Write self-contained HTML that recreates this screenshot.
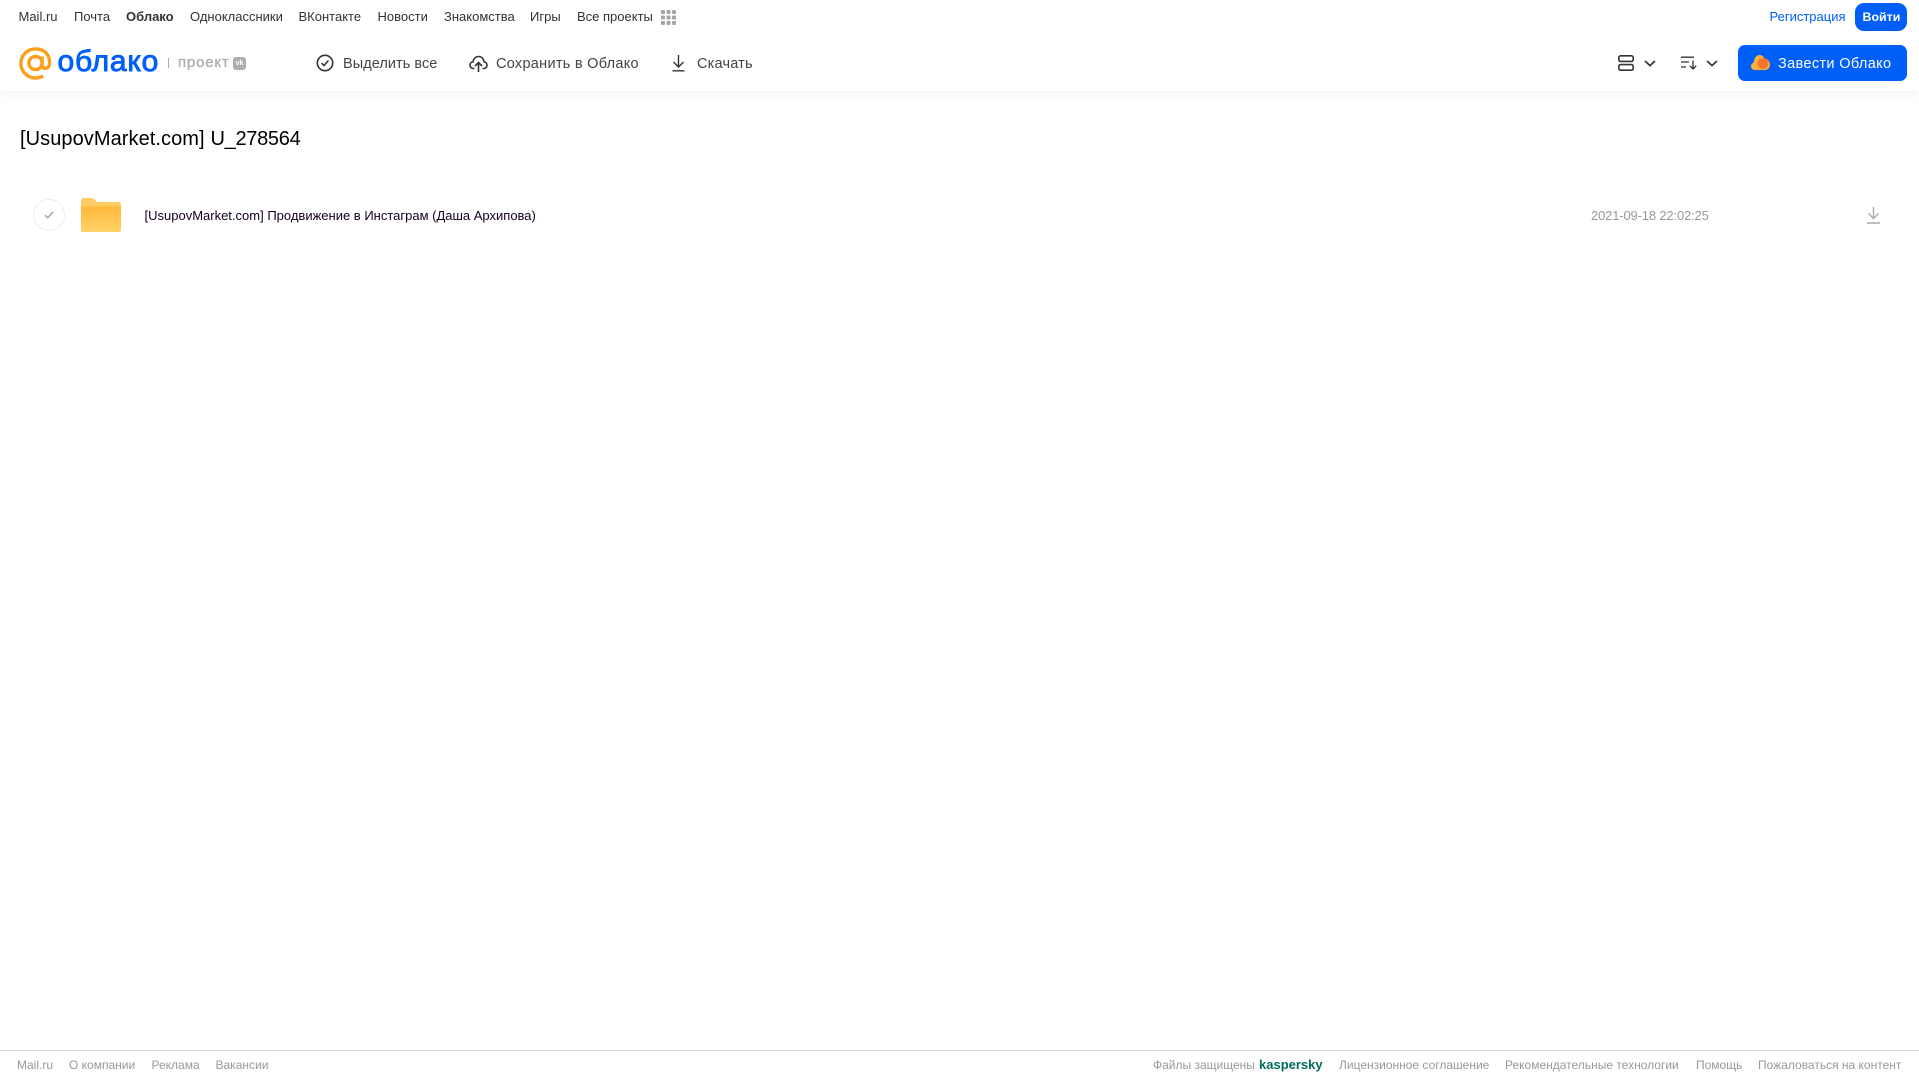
<!DOCTYPE html>
<html lang="ru">
<head>
<meta charset="utf-8">
<title>Облако</title>
<style>
html,body{margin:0;padding:0;background:#fff;}
body{position:relative;width:1919px;height:1079px;overflow:hidden;font-family:"Liberation Sans",sans-serif;color:#2c2d2e;}
.t{position:absolute;white-space:nowrap;line-height:20px;height:20px;}
.n{top:7px;font-size:13px;color:#333;}
.b{top:53.5px;font-size:14.5px;color:#444;}
.f{top:1055px;font-size:12px;color:#999;}
svg{position:absolute;overflow:visible;}
#hdr{position:absolute;left:0;top:0;width:1919px;height:91px;background:#fff;box-shadow:0 2px 8px rgba(0,0,0,.07);}
#btn1{position:absolute;left:1855px;top:3px;width:52px;height:28px;background:#005ff9;border-radius:9px;}
#btn2{position:absolute;left:1738px;top:45px;width:169px;height:36px;background:#005ff9;border-radius:7px;}
#fl{position:absolute;left:0;top:1050px;width:1919px;height:1px;background:#d9d9d9;}
</style>
</head>
<body>
<div id="hdr"></div>

<span class="t n" style="left:18.5px">Mail.ru</span>
<span class="t n" style="left:74px">Почта</span>
<span class="t n" style="left:126px;font-weight:bold">Облако</span>
<span class="t n" style="left:190px">Одноклассники</span>
<span class="t n" style="left:298.5px">ВКонтакте</span>
<span class="t n" style="left:377.5px">Новости</span>
<span class="t n" style="left:444px">Знакомства</span>
<span class="t n" style="left:530px">Игры</span>
<span class="t n" style="left:577px">Все проекты</span>
<svg style="left:661px;top:10px" width="15" height="15" viewBox="0 0 15 15" fill="#a5a5a5">
<rect x="0" y="0" width="4" height="4" rx="1"/><rect x="5.5" y="0" width="4" height="4" rx="1"/><rect x="11" y="0" width="4" height="4" rx="1"/>
<rect x="0" y="5.5" width="4" height="4" rx="1"/><rect x="5.5" y="5.5" width="4" height="4" rx="1"/><rect x="11" y="5.5" width="4" height="4" rx="1"/>
<rect x="0" y="11" width="4" height="4" rx="1"/><rect x="5.5" y="11" width="4" height="4" rx="1"/><rect x="11" y="11" width="4" height="4" rx="1"/>
</svg>

<span class="t n" style="left:1769.5px;color:#005ff9">Регистрация</span>
<div id="btn1"></div>
<span class="t n" style="left:1862.5px;color:#fff;font-weight:bold;font-size:12.4px">Войти</span>

<!-- logo -->
<svg style="left:19px;top:47px" width="33" height="33" viewBox="0 0 33 33" fill="none" stroke="#f9a11b" stroke-width="3.4">
<circle cx="16.5" cy="16" r="6.6"/>
<path d="M23.1 9.5V18.5C23.1 22.5 29.8 22.5 30.4 17.5C31.6 7.5 25 1.9 16.5 1.9C8.4 1.9 1.9 8.2 1.9 16.3C1.9 24.6 8.4 31 16.5 31C19.5 31 22 30.3 24.2 28.9"/>
</svg>
<span class="t" style="left:57.5px;top:46px;height:32px;line-height:32px;font-size:30px;color:#005ff9;letter-spacing:.8px;-webkit-text-stroke:.9px #005ff9">облако</span>
<div style="position:absolute;left:168px;top:58px;width:1px;height:10px;background:#aaa"></div>
<span class="t" style="left:178px;top:53px;font-size:15px;color:#aeaeae;letter-spacing:.8px;-webkit-text-stroke:.35px #aeaeae">проект</span>
<div style="position:absolute;left:233px;top:57px;width:13px;height:13px;background:#aeaeae;border-radius:3px"></div>
<span class="t" style="left:233px;top:57px;width:13px;height:13px;line-height:13px;font-size:7px;font-weight:bold;color:#fff;text-align:center">vk</span>

<!-- toolbar -->
<svg style="left:316px;top:54px" width="18" height="18" viewBox="0 0 18 18" fill="none" stroke="#333" stroke-width="1.6">
<circle cx="9" cy="9" r="7.7"/><path d="M5.6 9.2L8 11.5L12.4 6.6"/>
</svg>
<span class="t b" style="left:343px;letter-spacing:.05px">Выделить все</span>
<svg style="left:469px;top:54px" width="19" height="19" viewBox="0 0 19 19" fill="none" stroke="#333" stroke-width="1.6">
<path d="M5.5 14.5H4.5C2.5 14.5 1 13 1 11.2C1 9.4 2.3 8 4 7.8C4.5 4.6 6.8 2.5 9.6 2.5C12.4 2.5 14.6 4.6 15 7.8C16.7 8 18 9.4 18 11.2C18 13 16.5 14.5 14.5 14.5H13.5"/>
<path d="M9.5 18V9M6 12L9.5 8.5L13 12"/>
</svg>
<span class="t b" style="left:496px;letter-spacing:.28px">Сохранить в Облако</span>
<svg style="left:671px;top:54px" width="15" height="18" viewBox="0 0 15 18" fill="none" stroke="#333" stroke-width="1.4">
<path d="M7.5 1V12.5M2.5 8L7.5 13L12.5 8M1.5 16.8H13.5"/>
</svg>
<span class="t b" style="left:697px;letter-spacing:.2px">Скачать</span>

<svg style="left:1618px;top:55px" width="16" height="16" viewBox="0 0 16 16" fill="none" stroke="#333" stroke-width="1.6">
<rect x=".8" y=".8" width="14.4" height="5.6" rx="1.8"/><rect x=".8" y="9.6" width="14.4" height="5.6" rx="1.8"/>
</svg>
<svg style="left:1644px;top:60px" width="12" height="7" viewBox="0 0 12 7" fill="none" stroke="#333" stroke-width="1.7">
<path d="M1 1L6 5.6L11 1"/>
</svg>
<svg style="left:1681px;top:56px" width="17" height="14" viewBox="0 0 17 14" fill="none" stroke="#333" stroke-width="1.3">
<path d="M0 1.2H13M0 6H8M0 11H5M12 4.5V13M8.8 9.8L12 13L15.2 9.8"/>
</svg>
<svg style="left:1706px;top:60px" width="12" height="7" viewBox="0 0 12 7" fill="none" stroke="#333" stroke-width="1.7">
<path d="M1 1L6 5.6L11 1"/>
</svg>

<div id="btn2"></div>
<svg style="left:1751px;top:54px" width="19" height="17" viewBox="0 0 19 17">
<path d="M4 16C1.8 16 0 14.4 0 12.2C0 10.4 1.2 9 2.8 8.5C3 4 5.5 1 8.5 1C11 1 12.5 2.4 13.3 4.5C16.5 4.8 19 7.5 19 10.6C19 13.8 16.5 16 13.5 16Z" fill="#fdb13c"/>
<circle cx="12" cy="9.5" r="5.5" fill="#f5762c"/>
</svg>
<span class="t" style="left:1778px;top:53.5px;font-size:14.5px;color:#fff;letter-spacing:.35px">Завести Облако</span>

<!-- content -->
<span class="t" style="left:20px;top:126.5px;height:24px;line-height:24px;font-size:20px;color:#000;letter-spacing:.07px">[UsupovMarket.com]</span>
<span class="t" style="left:210.5px;top:126.5px;height:24px;line-height:24px;font-size:20px;color:#000;letter-spacing:-.3px">U_278564</span>

<div style="position:absolute;left:33px;top:199px;width:30px;height:30px;border:1px solid #eee;border-radius:50%"></div>
<svg style="left:44px;top:211px" width="10" height="8" viewBox="0 0 10 8" fill="none" stroke="#999" stroke-width="1.3">
<path d="M1 4.2L3.7 6.8L9 1"/>
</svg>
<svg style="left:81px;top:198px" width="40" height="34" viewBox="0 0 40 34">
<defs><linearGradient id="fg" x1="0" y1="0" x2="0" y2="1"><stop offset="0" stop-color="#ffb93a"/><stop offset="1" stop-color="#ffd168"/></linearGradient></defs>
<path d="M0 3C0 1.3 1.3 0 3 0H10C12 0 13.5 1 14.5 2.5C15.1 3.5 16 4 17 4H38C39.1 4 40 4.9 40 6V32C40 33.1 39.1 34 38 34H2C.9 34 0 33.1 0 32Z" fill="#ffcb63"/>
<path d="M0 8.5H40V32C40 33.1 39.1 34 38 34H2C.9 34 0 33.1 0 32Z" fill="url(#fg)"/>
</svg>
<span class="t" style="left:144.5px;top:205.5px;font-size:13px;color:#14001e">[UsupovMarket.com] Продвижение в Инстаграм (Даша Архипова)</span>
<span class="t" style="left:1591px;top:205.5px;font-size:13px;color:#999;letter-spacing:-.16px">2021-09-18 22:02:25</span>
<svg style="left:1867px;top:207px" width="13" height="17" viewBox="0 0 13 17" fill="none" stroke="#aaa" stroke-width="1.4">
<path d="M6.5 0V11M1.5 6.5L6.5 11.5L11.5 6.5M0 16H13"/>
</svg>

<!-- footer -->
<div id="fl"></div>
<span class="t f" style="left:17px">Mail.ru</span>
<span class="t f" style="left:69px">О компании</span>
<span class="t f" style="left:151.5px">Реклама</span>
<span class="t f" style="left:215.5px">Вакансии</span>
<span class="t f" style="left:1153px">Файлы защищены</span>
<span class="t" style="left:1259px;top:1055px;font-size:13px;font-weight:bold;color:#006d5c">kaspersky</span>
<span class="t f" style="left:1339px">Лицензионное соглашение</span>
<span class="t f" style="left:1505px">Рекомендательные технологии</span>
<span class="t f" style="left:1696px">Помощь</span>
<span class="t f" style="left:1758px">Пожаловаться на контент</span>
</body>
</html>
